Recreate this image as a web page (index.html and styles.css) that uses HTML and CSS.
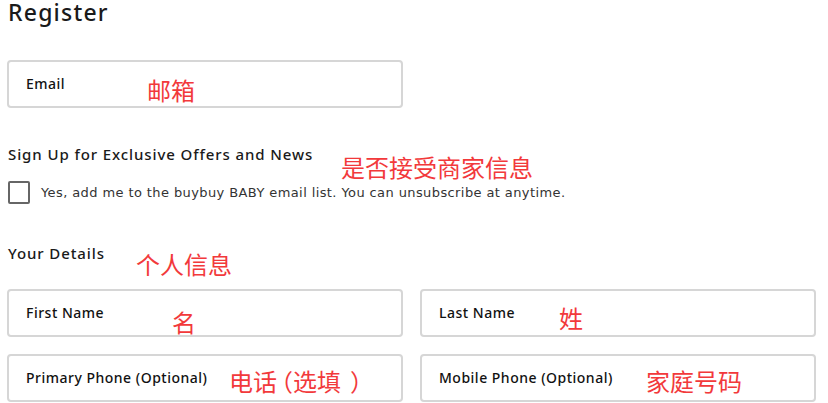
FILE: index.html
```html
<!DOCTYPE html>
<html lang="en">
<head>
<meta charset="utf-8">
<title>Register</title>
<link rel="stylesheet" href="styles.css">
</head>
<body>
<div class="page">
  <h1 class="title">Register</h1>

  <div class="field field-email">
    <span class="label">Email</span>
    <span class="note note-email">邮箱</span>
  </div>

  <div class="section section-offers">
    <h2 class="section-title">Sign Up for Exclusive Offers and News</h2>
    <span class="note note-offers">是否接受商家信息</span>
    <label class="check-row">
      <span class="checkbox"></span>
      <span class="check-text">Yes, add me to the buybuy BABY email list. You can unsubscribe at anytime.</span>
    </label>
  </div>

  <div class="section section-details">
    <h2 class="section-title">Your Details</h2>
    <span class="note note-details">个人信息</span>
  </div>

  <div class="row">
    <div class="field">
      <span class="label">First Name</span>
      <span class="note note-first">名</span>
    </div>
    <div class="field">
      <span class="label">Last Name</span>
      <span class="note note-last">姓</span>
    </div>
  </div>

  <div class="row row-phone">
    <div class="field">
      <span class="label">Primary Phone (Optional)</span>
      <span class="note note-phone">电话<span class="paren paren-open">（</span>选填<span class="paren paren-close">）</span></span>
    </div>
    <div class="field">
      <span class="label">Mobile Phone (Optional)</span>
      <span class="note note-mobile">家庭号码</span>
    </div>
  </div>
</div>
</body>
</html>
```
FILE: styles.css
```css
html, body {
  margin: 0;
  padding: 0;
  background: #ffffff;
}

body {
  font-family: "Noto Sans", "DejaVu Sans", sans-serif;
  color: #1a1a1a;
  overflow: hidden;
}

.page {
  display: flex;
  flex-direction: column;
  padding: 0 0 0 7px;
  width: 809px;
}

.title {
  margin: 0 0 0 1px;
  font-size: 23px;
  font-weight: 500;
  line-height: 24px;
  letter-spacing: 1.2px;
}

.field {
  position: relative;
  box-sizing: border-box;
  height: 48px;
  border: 2px solid #d6d6d6;
  border-radius: 4px;
  display: flex;
  align-items: center;
  padding: 0 0 0 17px;
}

.field-email {
  margin-top: 36px;
  width: 396px;
}

.field .label {
  font-size: 14px;
  font-weight: 500;
  letter-spacing: 0.5px;
  color: #111;
  margin-top: -2px;
}

.note {
  position: absolute;
  font-family: "Noto Sans CJK SC", "Noto Sans", sans-serif;
  font-size: 24px;
  line-height: 24px;
  color: #f2393b;
  white-space: nowrap;
}

.paren {
  font-feature-settings: "halt" 1;
}

.paren-open { margin: 0 0 0 4px; }
.paren-close { margin: 0 0 0 9px; }

.note-email { left: 138px; top: 16px; }

.section {
  position: relative;
  display: flex;
  flex-direction: column;
  padding-left: 1px;
}

.section-offers {
  margin-top: 36px;
}

.section-title {
  margin: 0;
  font-size: 15px;
  font-weight: 500;
  line-height: 20px;
  letter-spacing: 0.9px;
}

.note-offers { left: 334px; top: 11px; }

.check-row {
  display: flex;
  align-items: center;
  margin-top: 17px;
  gap: 11px;
}

.checkbox {
  box-sizing: border-box;
  width: 22px;
  height: 23px;
  border: 2px solid #666;
  border-radius: 2px;
  flex: none;
}

.check-text {
  font-family: "DejaVu Sans", sans-serif;
  font-size: 13px;
  color: #333;
  letter-spacing: 0.4px;
}

.section-details {
  margin-top: 39px;
}

.note-details { left: 129px; top: 9px; }

.row {
  display: grid;
  grid-template-columns: 396px 396px;
  column-gap: 17px;
  margin-top: 26px;
}

.row-phone {
  margin-top: 17px;
}

.note-first { left: 163px; top: 19px; }
.note-last { left: 137px; top: 15px; }
.note-phone { left: 220px; top: 13px; }
.note-mobile { left: 224px; top: 13px; }
```
